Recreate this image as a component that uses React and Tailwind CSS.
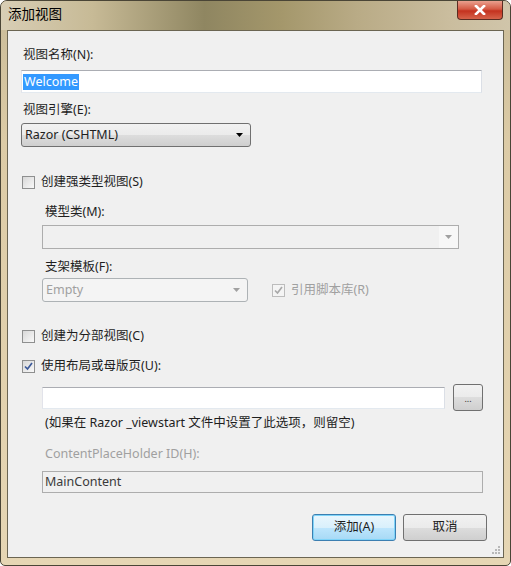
import React from "react";

const FONT = { fontFamily: '"Noto Sans", "Noto Sans CJK SC", sans-serif' };

function Tri({ color = "#000" }) {
  return (
    <svg width="7" height="4" viewBox="0 0 7 4" className="block">
      <path d="M0 0H7L3.5 4Z" fill={color} />
    </svg>
  );
}

function Check({ checked, disabled }) {
  return (
    <div
      className={
        "w-[13px] h-[13px] border flex items-center justify-center shrink-0 " +
        (disabled
          ? "border-[#bcbcbc] bg-[#f4f4f4]"
          : "border-[#8e8f8f] bg-[linear-gradient(135deg,#d8d8d8,#f9f9f9)]")
      }
    >
      {checked && (
        <svg width="9" height="9" viewBox="0 0 9 9">
          <path
            d="M1 4.5L3.5 7L8 1"
            fill="none"
            stroke={disabled ? "#a8a8a8" : "#3d5a9a"}
            strokeWidth="1.7"
          />
        </svg>
      )}
    </div>
  );
}

function Label({ children, className = "" }) {
  return (
    <div className={"h-[16px] leading-[16px] text-[12.5px] whitespace-nowrap " + className}>{children}</div>
  );
}

export default function App() {
  return (
    <div
      style={FONT}
      className="w-[511px] h-[566px] rounded-t-[7px] rounded-b-[5px] border border-[#4a4536] bg-[linear-gradient(to_bottom,#c9bb98,#dccba6_25%,#e6d6b4)] flex flex-col relative overflow-hidden text-[#1e1e1e]"
    >
      <div className="h-[29px] shrink-0 flex items-center pl-[7px] bg-[linear-gradient(to_right,#d8ceb5_0%,#c7ba96_18%,#8f8661_40%,#a4976b_55%,#b9ab86_70%,#cabd9e_88%,#d0c5aa_100%)]">
        <span className="text-[13.5px] text-black leading-none mt-[-1px]">添加视图</span>
      </div>
      <div className="absolute top-0 right-[7px] w-[46px] h-[19px] rounded-b-[4px] border border-t-0 border-[#5a2c22] bg-[linear-gradient(to_bottom,#eaa08e,#d45a44_45%,#c4321f_55%,#d6634a)] flex items-center justify-center">
        <svg width="12" height="10" viewBox="0 0 12 10">
          <path d="M2 1L10 9M10 1L2 9" stroke="#fff" strokeWidth="2.6" strokeLinecap="square" />
        </svg>
      </div>

      <div className="mx-[6px] mb-[7px] flex-1 border border-[#6b6552] bg-[#f0f0f0] relative">
        <div className="pl-[13px] flex flex-col">
          <Label className="mt-[16px] ml-[2px]">视图名称(N):</Label>
          <div className="mt-[7px] w-[461px] h-[23px] border border-[#abadb3] border-l-[#e2e3ea] border-r-[#dbdfe6] border-b-[#e3e9ef] bg-white flex items-center pl-[1px]">
            <span className="bg-[#3399ff] text-white text-[12.5px] leading-[16px] px-[1px]">Welcome</span>
          </div>
          <Label className="mt-[9px] ml-[2px]">视图引擎(E):</Label>
          <div className="mt-[5px] w-[230px] h-[24px] rounded-[3px] border border-[#707070] bg-[linear-gradient(to_bottom,#f2f2f2,#ebebeb_50%,#dddddd_50%,#cfcfcf)] flex items-center justify-between pl-[3px] pr-[7px]">
            <span className="text-[12.5px]">Razor (CSHTML)</span>
            <Tri />
          </div>

          <div className="mt-[27px] h-[16px] flex items-center pl-[1px]">
            <Check />
            <span className="ml-[6px] text-[12.5px]">创建强类型视图(S)</span>
          </div>

          <Label className="mt-[14px] ml-[24px]">模型类(M):</Label>
          <div className="mt-[5px] ml-[21px] w-[417px] h-[24px] border border-[#adadad] bg-[#f0f0f0] flex items-center justify-end">
            <div className="w-[19px] h-full bg-[#f7f7f7] flex items-center justify-center">
              <Tri color="#a0a0a0" />
            </div>
          </div>

          <Label className="mt-[10px] ml-[24px]">支架模板(F):</Label>
          <div className="mt-[3px] ml-[21px] h-[24px] flex items-center">
            <div className="w-[206px] h-[24px] rounded-[3px] border border-[#adb2b5] bg-[#f4f4f4] flex items-center justify-between pl-[3px] pr-[7px]">
              <span className="text-[12.5px] text-[#a0a0a0]">Empty</span>
              <Tri color="#a0a0a0" />
            </div>
            <div className="ml-[24px] flex items-center mt-[1px]">
              <Check checked disabled />
              <span className="ml-[6px] text-[12.5px] text-[#a0a0a0]">引用脚本库(R)</span>
            </div>
          </div>

          <div className="mt-[26px] h-[16px] flex items-center pl-[1px]">
            <Check />
            <span className="ml-[6px] text-[12.5px]">创建为分部视图(C)</span>
          </div>
          <div className="mt-[14px] h-[16px] flex items-center pl-[1px]">
            <Check checked />
            <span className="ml-[6px] text-[12.5px]">使用布局或母版页(U):</span>
          </div>

          <div className="mt-[10px] ml-[21px] h-[27px] flex items-center">
            <div className="w-[403px] h-[22px] border border-[#abadb3] border-l-[#e2e3ea] border-r-[#dbdfe6] border-b-[#e3e9ef] bg-white" />
            <div className="ml-[8px] w-[30px] h-[27px] rounded-[3px] border border-[#707070] bg-[linear-gradient(to_bottom,#f2f2f2,#ebebeb_50%,#dddddd_50%,#cfcfcf)] flex items-center justify-center">
              <span className="text-[9px] leading-none text-[#333] mt-[2px]">...</span>
            </div>
          </div>

          <Label className="mt-[4px] ml-[24px]">(如果在 Razor _viewstart 文件中设置了此选项，则留空)</Label>
          <Label className="mt-[15px] ml-[24px] text-[#a0a0a0]">ContentPlaceHolder ID(H):</Label>
          <div className="mt-[9px] ml-[21px] w-[441px] h-[22px] border border-[#adadad] bg-[#f0f0f0] flex items-center pl-[2px]">
            <span className="text-[12.5px] text-[#3a3a3a]">MainContent</span>
          </div>

          <div className="mt-[21px] h-[27px] flex justify-end pr-[16px] gap-[7px]">
            <div className="w-[84px] h-[27px] rounded-[3px] border border-[#3c7fb1] bg-[linear-gradient(to_bottom,#eaf6fd,#d9f0fc_50%,#bee6fd_50%,#a7d9f5)] flex items-center justify-center shadow-[inset_0_0_0_1px_#7fd4f9]">
              <span className="text-[12.5px]">添加(A)</span>
            </div>
            <div className="w-[84px] h-[27px] rounded-[3px] border border-[#707070] bg-[linear-gradient(to_bottom,#f2f2f2,#ebebeb_50%,#dddddd_50%,#cfcfcf)] flex items-center justify-center">
              <span className="text-[12.5px]">取消</span>
            </div>
          </div>
        </div>

        <svg width="10" height="10" viewBox="0 0 10 10" className="absolute right-[2px] bottom-[2px]">
          <g fill="#b8b8b8">
            <rect x="7" y="1" width="2" height="2" />
            <rect x="4" y="4" width="2" height="2" />
            <rect x="7" y="4" width="2" height="2" />
            <rect x="1" y="7" width="2" height="2" />
            <rect x="4" y="7" width="2" height="2" />
            <rect x="7" y="7" width="2" height="2" />
          </g>
        </svg>
      </div>
    </div>
  );
}
